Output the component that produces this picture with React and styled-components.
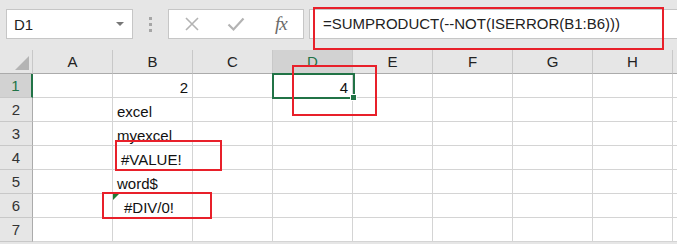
import React from "react";
import styled, { createGlobalStyle } from "styled-components";

const GlobalStyle = createGlobalStyle`
  body {
    margin: 0;
    background: #ffffff;
    font-family: "Liberation Sans", Arial, sans-serif;
  }
`;

const Page = styled.div`
  position: relative;
  width: 677px;
  height: 244px;
  overflow: hidden;
  background: #e6e6e6;
`;

const FormulaBar = styled.div`
  display: flex;
  align-items: flex-start;
  height: 50px;
  padding: 9px 0 0 6px;
  box-sizing: border-box;
`;

const NameBox = styled.div`
  display: flex;
  align-items: center;
  justify-content: space-between;
  width: 127px;
  height: 30px;
  box-sizing: border-box;
  padding: 0 8px 0 7px;
  background: #fff;
  border: 1px solid #c6c6c6;
  font-size: 15px;
  color: #222;
`;

const Caret = styled.span`
  width: 0;
  height: 0;
  border-left: 4px solid transparent;
  border-right: 4px solid transparent;
  border-top: 4px solid #777;
`;

const Grip = styled.div`
  display: flex;
  flex-direction: column;
  gap: 3px;
  margin: 8px 16px 0 16px;
  span {
    width: 3px;
    height: 3px;
    background: #a6a6a6;
  }
`;

const ButtonBox = styled.div`
  display: flex;
  align-items: center;
  width: 136px;
  height: 30px;
  box-sizing: border-box;
  padding: 0 0 0 15px;
  gap: 27px;
  background: #fff;
  border: 1px solid #c6c6c6;
`;

const Fx = styled.span`
  font-family: "Liberation Serif", "Times New Roman", serif;
  font-style: italic;
  font-size: 19px;
  color: #6a6a6a;
  margin-left: 3px;
  letter-spacing: -1px;
`;

const FormulaInput = styled.div`
  flex: 1;
  height: 30px;
  margin-left: 5px;
  box-sizing: border-box;
  padding: 5px 0 0 13px;
  background: #fff;
  border: 1px solid #c6c6c6;
  border-right: none;
  font-size: 15px;
  color: #222;
  white-space: nowrap;
`;

const Sheet = styled.div`
  display: grid;
  grid-template-columns: 33px repeat(8, 80px) 1fr;
  grid-auto-rows: 24px;
  background: #fff;
`;

const Corner = styled.div`
  position: relative;
  background: #e6e6e6;
  border-right: 1px solid #c8c8c8;
  border-bottom: 1px solid #ababab;
  box-sizing: border-box;
  &::after {
    content: "";
    position: absolute;
    right: 3px;
    bottom: 3px;
    border-left: 14px solid transparent;
    border-bottom: 14px solid #b4b4b4;
  }
`;

const ColHead = styled.div`
  display: flex;
  align-items: center;
  justify-content: center;
  box-sizing: border-box;
  background: ${(p) => (p.$active ? "#d2d2d2" : "#e6e6e6")};
  color: ${(p) => (p.$active ? "#217346" : "#222")};
  border-right: 1px solid #c8c8c8;
  border-bottom: 1px solid #ababab;
  font-size: 15px;
`;

const RowHead = styled.div`
  display: flex;
  align-items: center;
  justify-content: center;
  box-sizing: border-box;
  background: ${(p) => (p.$active ? "#d2d2d2" : "#e6e6e6")};
  color: ${(p) => (p.$active ? "#217346" : "#333")};
  border-right: ${(p) => (p.$active ? "2px solid #217346" : "1px solid #ababab")};
  border-bottom: 1px solid #c8c8c8;
  font-size: 15px;
`;

const Cell = styled.div`
  position: relative;
  box-sizing: border-box;
  border-right: 1px solid #d4d4d4;
  border-bottom: 1px solid #d4d4d4;
  font-size: 15px;
  color: #111;
  line-height: 24px;
  padding: 2px ${(p) => (p.$right ? "4px" : "0")} 0
    ${(p) => (p.$indent ? `${p.$indent}px` : "4px")};
  text-align: ${(p) => (p.$right ? "right" : "left")};
  white-space: nowrap;
  ${(p) =>
    p.$flag &&
    `&::before {
      content: "";
      position: absolute;
      left: 0;
      top: 0;
      border-top: 6px solid #1e7b34;
      border-right: 6px solid transparent;
    }`}
`;

const Selection = styled.div`
  position: absolute;
  left: 272px;
  top: 73px;
  width: 83px;
  height: 26px;
  box-sizing: border-box;
  border: 2px solid #217346;
  &::after {
    content: "";
    position: absolute;
    right: -4px;
    bottom: -4px;
    width: 5px;
    height: 5px;
    background: #217346;
    border: 1px solid #fff;
  }
`;

const Callout = styled.div`
  position: absolute;
  box-sizing: border-box;
  border: 2px solid #e8202a;
`;

const columns = ["A", "B", "C", "D", "E", "F", "G", "H", ""];

const data = {
  1: { B: { text: "2", right: true }, D: { text: "4", right: true } },
  2: { B: { text: "excel" } },
  3: { B: { text: "myexcel" } },
  4: { B: { text: "#VALUE!", indent: 8 } },
  5: { B: { text: "word$" } },
  6: { B: { text: "#DIV/0!", indent: 11, flag: true } },
  7: {},
};

const callouts = [
  { left: 313, top: 7, width: 351, height: 43 },
  { left: 292, top: 65, width: 85, height: 51 },
  { left: 115, top: 140, width: 107, height: 31 },
  { left: 102, top: 192, width: 110, height: 27 },
];

const CrossIcon = () => (
  <svg width="16" height="16" viewBox="0 0 16 16">
    <path d="M2 2 L14 14 M14 2 L2 14" stroke="#b3b3b3" strokeWidth="1.6" fill="none" />
  </svg>
);

const CheckIcon = () => (
  <svg width="18" height="16" viewBox="0 0 18 16">
    <path d="M1.5 8.5 L6.5 13.5 L16.5 2.5" stroke="#b3b3b3" strokeWidth="2.2" fill="none" />
  </svg>
);

const App = () => {
  return (
    <Page>
      <GlobalStyle />
      <FormulaBar>
        <NameBox>
          D1
          <Caret />
        </NameBox>
        <Grip>
          <span />
          <span />
          <span />
        </Grip>
        <ButtonBox>
          <CrossIcon />
          <CheckIcon />
          <Fx>fx</Fx>
        </ButtonBox>
        <FormulaInput>=SUMPRODUCT(--NOT(ISERROR(B1:B6)))</FormulaInput>
      </FormulaBar>
      <Sheet>
        <Corner />
        {columns.map((c, i) => (
          <ColHead key={i} $active={c === "D"}>
            {c}
          </ColHead>
        ))}
        {Object.keys(data).map((r) => (
          <React.Fragment key={r}>
            <RowHead $active={r === "1"}>{r}</RowHead>
            {columns.map((c, i) => {
              const cell = data[r][c];
              return (
                <Cell
                  key={i}
                  $right={cell && cell.right}
                  $indent={cell && cell.indent}
                  $flag={cell && cell.flag}
                >
                  {cell ? cell.text : ""}
                </Cell>
              );
            })}
          </React.Fragment>
        ))}
      </Sheet>
      <Selection />
      {callouts.map((c, i) => (
        <Callout
          key={i}
          style={{ left: c.left, top: c.top, width: c.width, height: c.height }}
        />
      ))}
    </Page>
  );
};

export default App;
